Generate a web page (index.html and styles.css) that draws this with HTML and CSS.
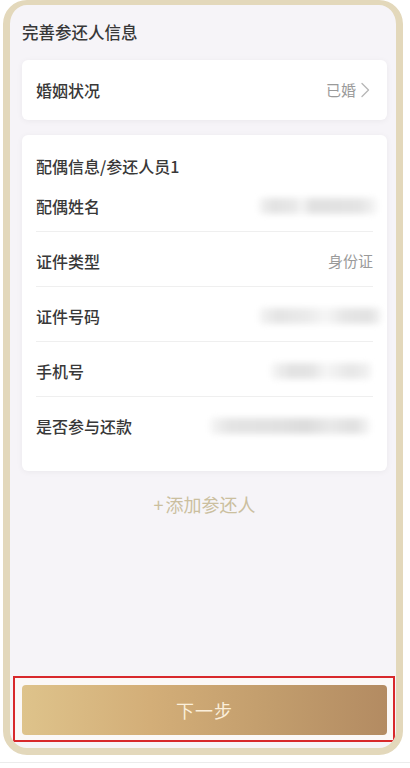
FILE: index.html
```html
<!DOCTYPE html>
<html lang="zh-CN">
<head>
<meta charset="utf-8">
<title>完善参还人信息</title>
<link rel="stylesheet" href="styles.css">
</head>
<body>
<div class="frame">
  <div class="header">完善参还人信息</div>

  <div class="card card-marital">
    <div class="label">婚姻状况</div>
    <div class="value-link">
      <span class="value">已婚</span>
      <svg class="chevron" width="14" height="16" viewBox="0 0 14 16"><path d="M4 1.5 L10.5 8 L4 14.5" fill="none" stroke="#b8b8b8" stroke-width="1.4" stroke-linecap="round" stroke-linejoin="round"/></svg>
    </div>
  </div>

  <div class="card card-spouse">
    <div class="card-title">配偶信息/参还人员1</div>
    <div class="row">
      <div class="label">配偶姓名</div>
      <div class="mask mask-name"></div>
    </div>
    <div class="row">
      <div class="label">证件类型</div>
      <div class="value">身份证</div>
    </div>
    <div class="row">
      <div class="label">证件号码</div>
      <div class="mask mask-id"></div>
    </div>
    <div class="row">
      <div class="label">手机号</div>
      <div class="mask mask-phone"></div>
    </div>
    <div class="row">
      <div class="label">是否参与还款</div>
      <div class="mask mask-repay"></div>
    </div>
  </div>

  <div class="add"><span class="plus">+</span>添加参还人</div>

  <div class="spacer"></div>

  <div class="btn-wrap">
    <div class="btn">下一步</div>
  </div>
</div>
<div class="bottom-line"></div>
</body>
</html>
```

FILE: styles.css
```css
html, body {
  margin: 0;
  padding: 0;
  background: #ffffff;
}
body {
  font-family: "Noto Sans CJK SC", "Noto Sans", sans-serif;
  width: 410px;
  height: 768px;
  overflow: hidden;
}
.frame {
  box-sizing: border-box;
  margin-left: 3px;
  width: 400px;
  height: 755px;
  border: 7px solid #e3d8bb;
  border-top-width: 5px;
  border-radius: 24px;
  background: #f6f4f8;
  display: flex;
  flex-direction: column;
  overflow: hidden;
}
.header {
  padding: 16px 0 17px 12px;
  font-size: 16.5px;
  line-height: 22px;
  font-weight: 500;
  color: #383838;
}
.card {
  background: #fff;
  margin: 0 9px 0 12px;
  border-radius: 6px;
  box-shadow: 0 1px 6px rgba(0, 0, 0, 0.05);
}
.card-marital {
  height: 60px;
  display: flex;
  align-items: center;
  justify-content: space-between;
  padding: 0 14px;
}
.label {
  font-size: 16px;
  line-height: 22px;
  font-weight: 500;
  color: #383838;
}
.value {
  font-size: 15px;
  line-height: 22px;
  color: #9a9a9a;
}
.value-link {
  display: flex;
  align-items: center;
  gap: 2px;
}
.chevron {
  display: block;
  margin-right: 1px;
}
.card-spouse {
  margin-top: 15px;
  padding: 20px 14px 19px;
}
.card-title {
  font-size: 16px;
  line-height: 22px;
  font-weight: 500;
  color: #383838;
  height: 22px;
}
.row {
  box-sizing: border-box;
  height: 55px;
  padding-top: 3px;
  display: flex;
  align-items: center;
  justify-content: space-between;
  border-bottom: 1px solid #efefef;
}
.row:last-child {
  border-bottom: none;
}
.mask {
  height: 16px;
  border-radius: 4px;
  filter: blur(3px);
}
.mask-name {
  width: 118px;
  margin-right: -4px;
  background: linear-gradient(90deg, #f3f3f3 0%, #e2e2e2 12%, #e8e8e8 30%, #f5f5f5 36%, #e0e0e0 45%, #e4e4e4 85%, #f6f6f6 100%);
}
.mask-id {
  width: 122px;
  margin-right: -8px;
  background: linear-gradient(90deg, #f5f5f5 0%, #e4e4e4 15%, #ebebeb 40%, #f6f6f6 55%, #e6e6e6 70%, #e2e2e2 90%, #f3f3f3 100%);
}
.mask-phone {
  width: 100px;
  margin-right: 2px;
  background: linear-gradient(90deg, #f6f6f6 0%, #e2e2e2 20%, #e4e4e4 40%, #f6f6f6 55%, #e6e6e6 80%, #f3f3f3 100%);
}
.mask-repay {
  width: 160px;
  margin-right: 3px;
  background: linear-gradient(90deg, #f6f6f6 0%, #e4e4e4 12%, #e1e1e1 45%, #dcdcdc 60%, #e9e9e9 75%, #e0e0e0 90%, #f6f6f6 100%);
}
.add {
  margin-top: 22px;
  text-align: center;
  font-size: 18px;
  line-height: 22px;
  color: #cbbf9f;
  padding-left: 3px;
}
.plus {
  margin-right: 2px;
}
.spacer {
  flex: 1;
}
.btn-wrap {
  margin: 0 1px 6px 3px;
  border: 2px solid #d8282c;
  padding: 7px 6px 5px 7px;
  background: #fbf8f7;
}
.btn {
  height: 50px;
  border-radius: 4px;
  background: linear-gradient(90deg, #dec38b 0%, #d3ae78 35%, #c19c6c 70%, #b38b62 100%);
  color: #fbefdb;
  font-size: 18px;
  line-height: 50px;
  text-align: center;
  letter-spacing: 1px;
}
.bottom-line {
  margin-top: 7px;
  border-top: 1px solid #ececec;
}
```
